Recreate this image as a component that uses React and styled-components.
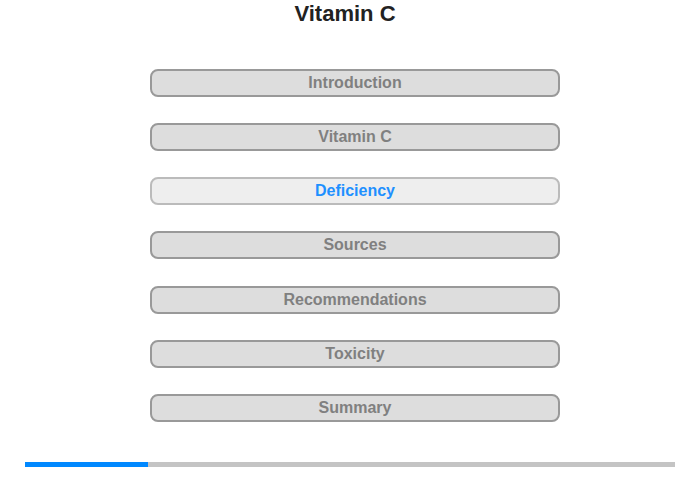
import * as React from 'react'
import styled, { createGlobalStyle } from 'styled-components'

const GlobalStyle = createGlobalStyle`
    body {
        margin: 0;
        background: #fff;
        font-family: "Liberation Sans", Arial, sans-serif;
    }
`;

const Page = styled.div`
    width: 700px;
    height: 480px;
    display: flex;
    flex-direction: column;
    align-items: center;
`;

const Title = styled.h1`
    margin: 0;
    padding-top: 1px;
    height: 68px;
    font-size: 22px;
    line-height: 25px;
    font-weight: 700;
    color: #222;
    transform: translateX(-5px);
`;

const Menu = styled.div`
    display: flex;
    flex-direction: column;
    gap: 26.15px;
    margin-left: 10px;
`;

const Item = styled.button`
    width: 410px;
    height: 28px;
    box-sizing: border-box;
    border: 2px solid ${p => (p.$active ? '#bbb' : '#999')};
    border-radius: 8px;
    background: ${p => (p.$active ? '#eee' : '#ddd')};
    color: ${p => (p.$active ? '#1e90ff' : '#808080')};
    font-family: "Liberation Sans", Arial, sans-serif;
    font-size: 16px;
    font-weight: 700;
    padding: 0;
    cursor: pointer;
`;

const Track = styled.div`
    align-self: stretch;
    margin: 40.1px 25px 0;
    height: 5px;
    background: #c4c4c4;
`;

const Fill = styled.div`
    height: 100%;
    background: #0088ff;
`;

const sections = [
    'Introduction',
    'Vitamin C',
    'Deficiency',
    'Sources',
    'Recommendations',
    'Toxicity',
    'Summary'
];

const App = () => {
    const current = 2;
    const progress = 123 / 650;

    return (
        <>
            <GlobalStyle />
            <Page>
                <Title>Vitamin C</Title>
                <Menu>
                    {sections.map((name, index) => (
                        <Item key={name} $active={index === current}>{name}</Item>
                    ))}
                </Menu>
                <Track>
                    <Fill style={{ width: `${progress * 100}%` }} />
                </Track>
            </Page>
        </>
    )
}

export default App
